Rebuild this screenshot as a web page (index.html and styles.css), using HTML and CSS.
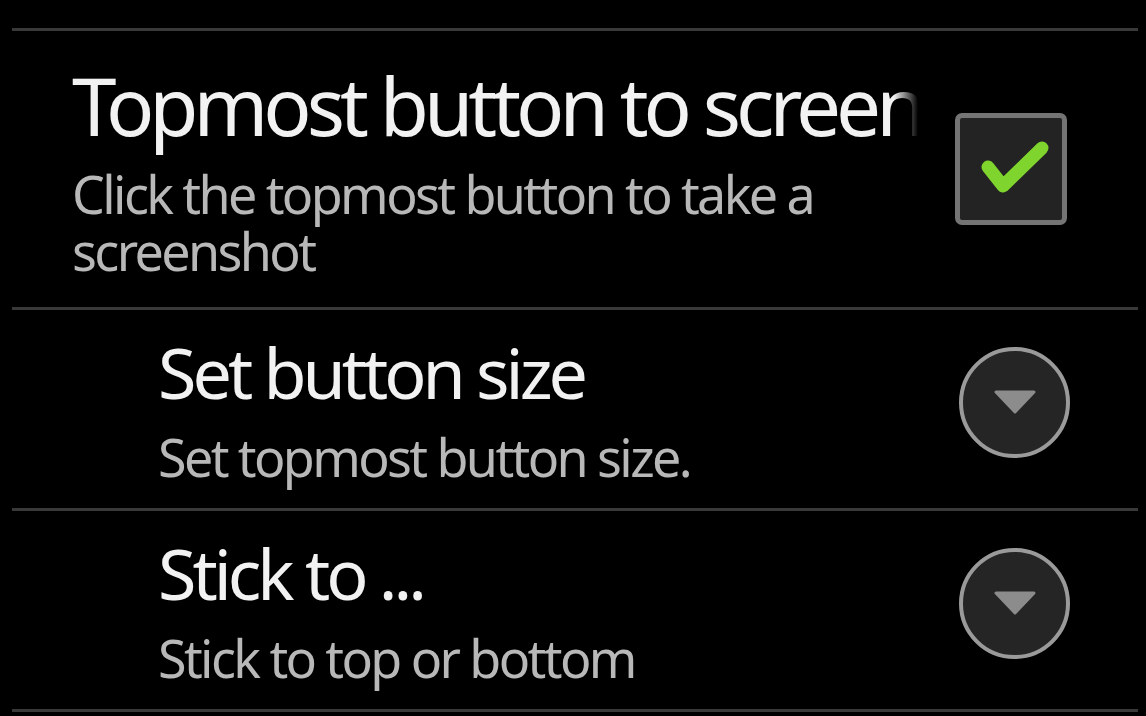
FILE: index.html
```html
<!DOCTYPE html>
<html lang="en">
<head>
    <meta charset="UTF-8">
    <meta name="viewport" content="width=device-width, initial-scale=1.0">
    <title>Screenshot settings</title>
    <link rel="stylesheet" href="styles.css">
</head>
<body>
    <div class="prefs">
        <div class="pref pref-main">
            <div class="pref-text">
                <div class="pref-title title-large fade">Topmost button to screen</div>
                <div class="pref-summary">Click the topmost button to take a<br>screenshot</div>
            </div>
            <div class="pref-widget">
                <div class="checkbox">
                    <svg width="102" height="102" viewBox="0 0 102 102">
                        <polyline points="28,49 43,68 82,30" fill="none" stroke="#80d42e" stroke-width="13" stroke-linecap="round" stroke-linejoin="round"/>
                    </svg>
                </div>
            </div>
        </div>

        <div class="pref pref-child">
            <div class="pref-text">
                <div class="pref-title">Set button size</div>
                <div class="pref-summary">Set topmost button size.</div>
            </div>
            <div class="pref-widget">
                <div class="spinner">
                    <svg width="42" height="24" viewBox="0 0 42 24">
                        <polygon points="2,2 40,2 21,22" fill="#8c8c8c" stroke="#8c8c8c" stroke-width="3" stroke-linejoin="round"/>
                    </svg>
                </div>
            </div>
        </div>

        <div class="pref pref-child">
            <div class="pref-text">
                <div class="pref-title">Stick to ...</div>
                <div class="pref-summary">Stick to top or bottom</div>
            </div>
            <div class="pref-widget">
                <div class="spinner">
                    <svg width="42" height="24" viewBox="0 0 42 24">
                        <polygon points="2,2 40,2 21,22" fill="#8c8c8c" stroke="#8c8c8c" stroke-width="3" stroke-linejoin="round"/>
                    </svg>
                </div>
            </div>
        </div>
    </div>
</body>
</html>
```

FILE: styles.css
```css
html, body {
    background: #000;
}
body {
    margin: 0;
    padding-top: 28px;
    font-family: "Noto Sans", "Open Sans", sans-serif;
    overflow: hidden;
}
.prefs {
    margin: 0 8px 0 12px;
    border-top: 3px solid #393939;
}
.pref {
    display: flex;
    align-items: center;
    border-bottom: 3px solid #393939;
    padding: 15px 68px 23px 60px;
}
.pref-main {
    padding-top: 19px;
    padding-bottom: 28px;
}
.pref-child {
    padding-left: 146px;
}
.pref-text {
    flex: 1;
    min-width: 0;
    margin-right: 40px;
}
.pref-title {
    color: #f2f2f2;
    font-size: 70px;
    line-height: 95px;
    letter-spacing: -4px;
    white-space: nowrap;
}
.title-large {
    font-size: 80px;
    line-height: 109px;
    letter-spacing: -5px;
}
.fade {
    overflow: hidden;
    -webkit-mask-image: linear-gradient(to right, #000 calc(100% - 24px), transparent);
    mask-image: linear-gradient(to right, #000 calc(100% - 24px), transparent);
}
.pref-summary {
    color: #b8b8b8;
    font-size: 52px;
    line-height: 57px;
    letter-spacing: -2.6px;
    margin-top: 8px;
}
.title-large + .pref-summary {
    margin-top: 6px;
}
.pref-widget {
    width: 112px;
    display: flex;
    justify-content: flex-end;
}
.checkbox {
    width: 102px;
    height: 102px;
    border: 5px solid #747474;
    border-radius: 7px;
    background: #232323;
    margin: 9px 3px 0 0;
}
.checkbox svg {
    display: block;
}
.spinner {
    width: 103px;
    height: 103px;
    border: 4px solid #9a9a9a;
    border-radius: 50%;
    background: #252525;
    display: flex;
    align-items: center;
    justify-content: center;
    margin-bottom: 6px;
}
```
